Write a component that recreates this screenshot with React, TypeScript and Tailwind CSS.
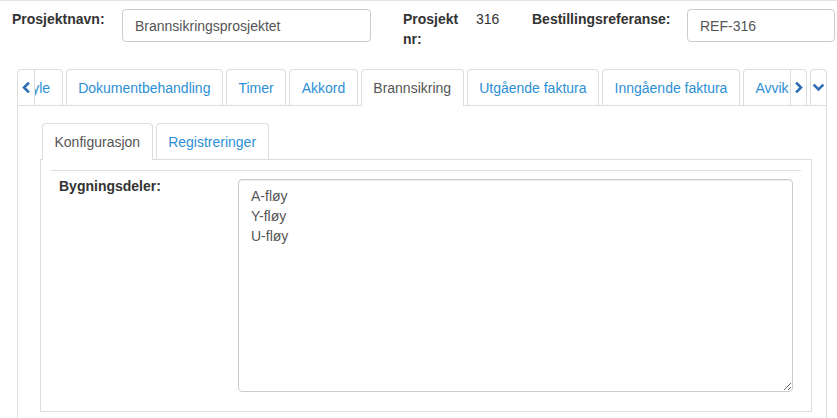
import { useState } from "react";

const OUTER_TABS = [
  "Dokumentbehandling",
  "Timer",
  "Akkord",
  "Brannsikring",
  "Utgående faktura",
  "Inngående faktura",
  "Avvik",
];

const INNER_TABS = ["Konfigurasjon", "Registreringer"];

function Chevron({ dir }: { dir: "left" | "right" | "down" }) {
  const points =
    dir === "left" ? "6,1.5 2,5.5 6,9.5" : dir === "right" ? "2,1.5 6,5.5 2,9.5" : "1.5,2.5 5.5,6.5 9.5,2.5";
  return (
    <svg
      width={dir === "down" ? 11 : 8}
      height={dir === "down" ? 9 : 11}
      viewBox={dir === "down" ? "0 0 11 9" : "0 0 8 11"}
      fill="none"
      aria-hidden="true"
    >
      <polyline points={points} stroke="#2f6eb5" strokeWidth="2.6" strokeLinecap="square" />
    </svg>
  );
}

function Tab({ label, active, className = "" }: { label: string; active?: boolean; className?: string }) {
  return (
    <div
      className={
        "flex shrink-0 items-center whitespace-nowrap rounded-t-[4px] border border-b-0 border-[#ddd] px-[11.5px] " +
        (active ? "h-[37px] bg-white text-[#555]" : "h-[36px] text-[#2d8fd5]") +
        " " +
        className
      }
    >
      {label}
    </div>
  );
}

export default function App() {
  const [text, setText] = useState("A-fløy\nY-fløy\nU-fløy");

  return (
    <div
      className="min-h-[418px] border-t border-[#e3e3e3] bg-white text-[14px] leading-[20px] text-[#333]"
      style={{ fontFamily: '"Liberation Sans", Arial, sans-serif' }}
    >
      {/* header fields */}
      <div className="flex items-start pl-[12px] pt-[8px]">
        <div className="w-[110px] font-bold">Prosjektnavn:</div>
        <input
          className="h-[33px] w-[249px] rounded-[4px] border border-[#ccc] px-[12px] text-[#555] outline-none"
          defaultValue="Brannsikringsprosjektet"
        />
        <div className="ml-[32px] w-[73px] font-bold">Prosjekt nr:</div>
        <div className="w-[56px]">316</div>
        <div className="w-[155px] font-bold">Bestillingsreferanse:</div>
        <input
          className="h-[33px] w-[148px] rounded-[4px] border border-[#ccc] px-[12px] text-[#555] outline-none"
          defaultValue="REF-316"
        />
      </div>

      {/* outer tabs */}
      <div className="ml-[17px] mr-[10px] mt-[20px]">
        <div className="relative z-10 -mb-px flex h-[37px] items-start">
          <div className="flex h-[36px] w-[18px] shrink-0 items-center justify-center rounded-tl-[4px] border border-b-0 border-[#ddd]">
            <Chevron dir="left" />
          </div>
          <div className="flex h-[37px] min-w-0 flex-1 items-start gap-[3px] overflow-hidden">
            <Tab label="Style" className="-ml-[28.5px]" />
            {OUTER_TABS.map((t) => (
              <Tab key={t} label={t} active={t === "Brannsikring"} />
            ))}
          </div>
          <div className="flex h-[36px] w-[17px] shrink-0 items-center justify-center rounded-tr-[4px] border border-b-0 border-[#ddd]">
            <Chevron dir="right" />
          </div>
          <div className="ml-[3px] flex h-[36px] w-[17px] shrink-0 items-center justify-center rounded-t-[4px] border border-b-0 border-[#ddd]">
            <Chevron dir="down" />
          </div>
        </div>

        {/* outer panel */}
        <div className="h-[313px] border border-b-0 border-[#ddd] pl-[22px] pr-[14px] pt-[17px]">
          <div className="relative z-10 -mb-px ml-[2px] flex h-[37px] items-start gap-[3px]">
            {INNER_TABS.map((t) => (
              <Tab key={t} label={t} active={t === "Konfigurasjon"} />
            ))}
          </div>
          <div className="border border-[#ddd] px-[10px] pb-[19px] pt-[10px]">
            <div className="border-t border-[#ddd]" />
            <div className="mt-[8px] flex items-start pl-[8px] pr-[8px]">
              <div className="-mt-[3px] w-[179px] font-bold">Bygningsdeler:</div>
              <textarea
                className="h-[213px] flex-1 rounded-[4px] border border-[#ccc] px-[12px] py-[6px] text-[#555] shadow-[inset_0_1px_1px_rgba(0,0,0,0.075)] outline-none"
                value={text}
                onChange={(e) => setText(e.target.value)}
              />
            </div>
          </div>
        </div>
      </div>
    </div>
  );
}
